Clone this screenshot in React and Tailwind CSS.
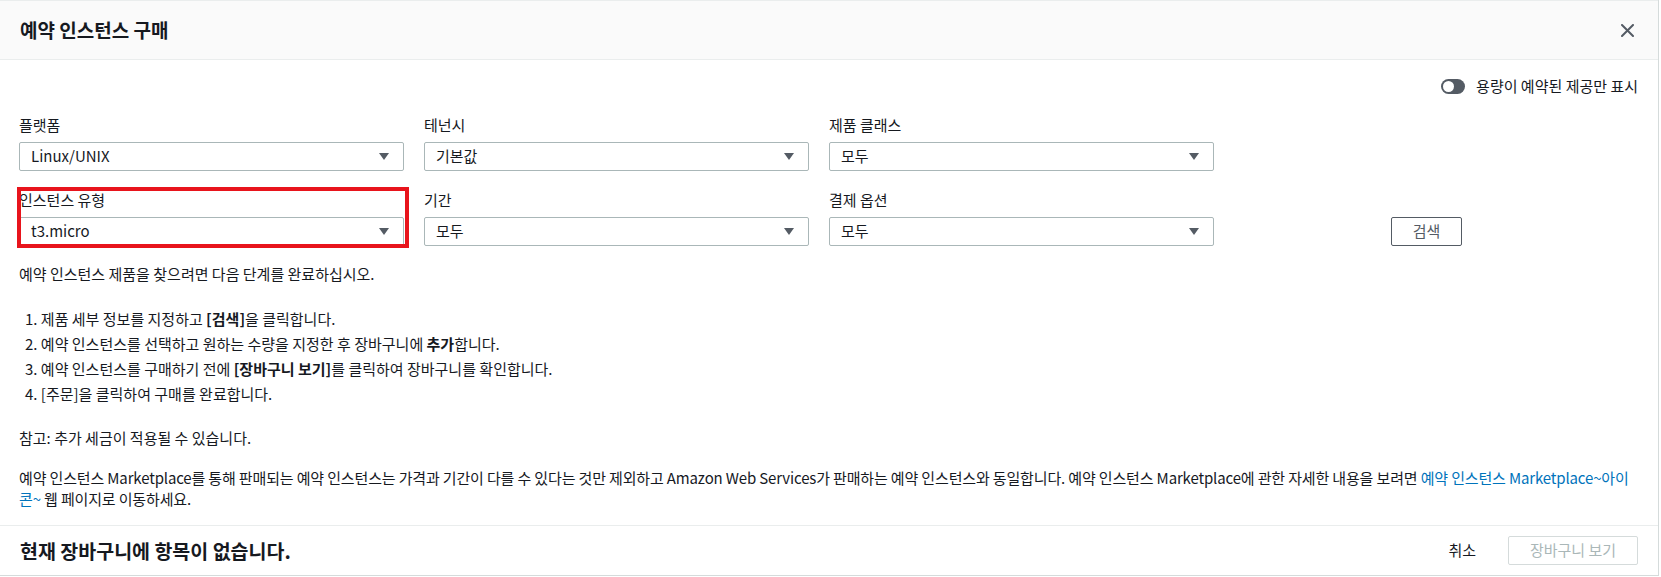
import React from 'react';

const ArrowDown = () => (
    <svg width="10" height="8" viewBox="0 0 10 8" className="shrink-0">
        <path d="M0 0 L10 0 L5 7 Z" fill="#545b64" />
    </svg>
);

const SelectBox = ({ value }) => (
    <div className="flex items-center justify-between h-[29px] pl-[11px] pr-[14px] border border-[#aab7b8] rounded-[2px] bg-white text-[15px] text-[#16191f]">
        <span>{value}</span>
        <ArrowDown />
    </div>
);

const Field = ({ label, value }) => (
    <div className="flex flex-col">
        <div className="h-[20px] leading-[20px] text-[15px] text-[#16191f] mb-[7px]">{label}</div>
        <SelectBox value={value} />
    </div>
);

export default function App() {
    return (
        <div className="w-[1659px] h-[577px] bg-white font-['Noto_Sans_CJK_KR',sans-serif] text-[#16191f]">
            <div className="h-[576px] flex flex-col border-r border-b border-[#d5dbdb]">
                {/* 헤더 */}
                <div className="h-[60px] shrink-0 flex items-center justify-between pl-[20px] pr-[24px] bg-[#fafafa] border-t border-b border-[#eaeded]">
                    <h1 className="text-[19px] font-bold">예약 인스턴스 구매</h1>
                    <svg width="13" height="13" viewBox="0 0 13 13">
                        <path d="M1 1 L12 12 M12 1 L1 12" stroke="#545b64" strokeWidth="2" strokeLinecap="round" />
                    </svg>
                </div>

                {/* 본문 */}
                <div className="flex-1 pl-[19px] pr-[20px] text-[15px]">
                    <div className="flex justify-end items-center h-[20px] mt-[16px]">
                        <div className="relative w-[24px] h-[15px] rounded-full bg-[#545b64]">
                            <div className="absolute left-[2px] top-[2px] w-[11px] h-[11px] rounded-full bg-white"></div>
                        </div>
                        <span className="ml-[11px]">용량이 예약된 제공만 표시</span>
                    </div>

                    <div className="grid grid-cols-[385px_385px_385px] gap-x-[20px] mt-[19px] w-[1195px]">
                        <Field label="플랫폼" value="Linux/UNIX" />
                        <Field label="테넌시" value="기본값" />
                        <Field label="제품 클래스" value="모두" />
                    </div>

                    <div className="flex items-end mt-[19px]">
                        <div className="grid grid-cols-[385px_385px_385px] gap-x-[20px] w-[1195px]">
                            <div className="relative">
                                <Field label="인스턴스 유형" value="t3.micro" />
                                <div className="absolute left-[-2px] top-[-3px] w-[392px] h-[61px] border-[4px] border-[#e8141c]"></div>
                            </div>
                            <Field label="기간" value="모두" />
                            <Field label="결제 옵션" value="모두" />
                        </div>
                        <button className="ml-[177px] w-[71px] h-[29px] border border-[#545b64] rounded-[2px] bg-white text-[15px] text-[#545b64]">
                            검색
                        </button>
                    </div>

                    <p className="mt-[18px] leading-[20px]">예약 인스턴스 제품을 찾으려면 다음 단계를 완료하십시오.</p>

                    <div className="mt-[22px] pl-[6px] leading-[25px]">
                        <div>1. 제품 세부 정보를 지정하고 <b>[검색]</b>을 클릭합니다.</div>
                        <div>2. 예약 인스턴스를 선택하고 원하는 수량을 지정한 후 장바구니에 <b>추가</b>합니다.</div>
                        <div>3. 예약 인스턴스를 구매하기 전에 <b>[장바구니 보기]</b>를 클릭하여 장바구니를 확인합니다.</div>
                        <div>4. [주문]을 클릭하여 구매를 완료합니다.</div>
                    </div>

                    <p className="mt-[22px] leading-[20px]">참고: 추가 세금이 적용될 수 있습니다.</p>

                    <p className="mt-[19px] leading-[21px] tracking-[-0.15px]">
                        예약 인스턴스 Marketplace를 통해 판매되는 예약 인스턴스는 가격과 기간이 다를 수 있다는 것만 제외하고 Amazon Web Services가 판매하는 예약 인스턴스와 동일합니다. 예약 인스턴스 Marketplace에 관한 자세한 내용을 보려면{' '}
                        <a href="#" className="text-[#0073bb]">예약 인스턴스 Marketplace~아이콘~</a> 웹 페이지로 이동하세요.
                    </p>
                </div>

                {/* 푸터 */}
                <div className="h-[50px] shrink-0 flex items-center justify-between pl-[20px] pr-[20px] border-t border-[#eaeded]">
                    <div className="text-[19.5px] font-bold">현재 장바구니에 항목이 없습니다.</div>
                    <div className="flex items-center">
                        <button className="text-[15px] text-[#16191f] mr-[32px]">취소</button>
                        <button className="w-[130px] h-[29px] border border-[#d5dbdb] rounded-[2px] bg-white text-[15px] text-[#aab7b8]">
                            장바구니 보기
                        </button>
                    </div>
                </div>
            </div>
        </div>
    );
}
